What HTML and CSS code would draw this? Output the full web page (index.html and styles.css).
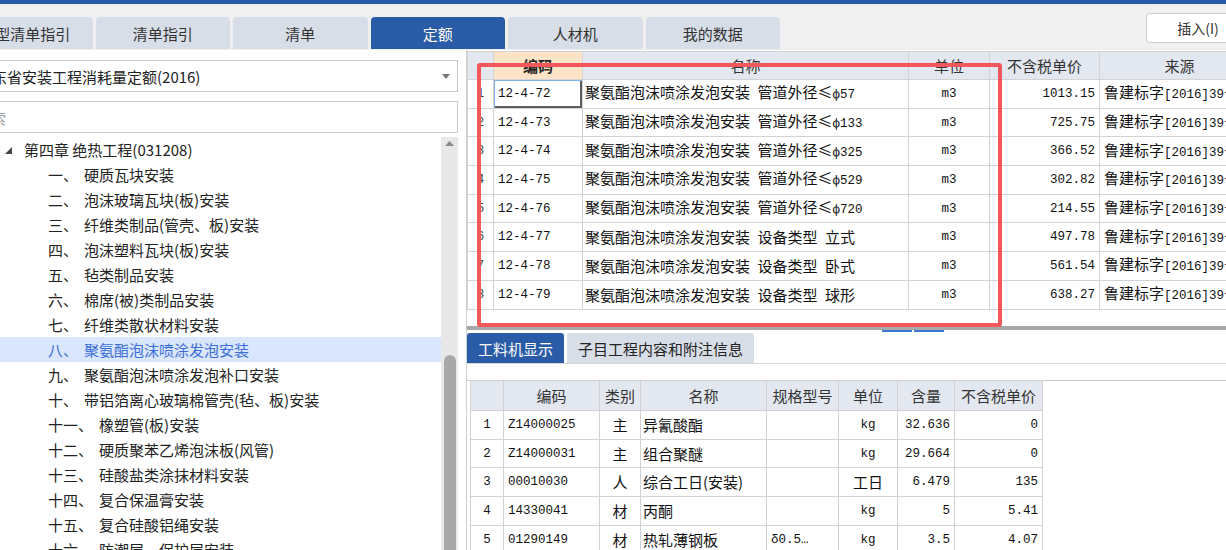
FILE: index.html
```html
<!DOCTYPE html>
<html lang="zh-CN">
<head>
<meta charset="utf-8">
<title>定额</title>
<link rel="stylesheet" href="styles.css">
</head>
<body>
<div class="app">
  <div class="topbar"></div>
  <div class="tabrow">
    <div class="tab">典型清单指引</div>
    <div class="tab">清单指引</div>
    <div class="tab">清单</div>
    <div class="tab active">定额</div>
    <div class="tab">人材机</div>
    <div class="tab">我的数据</div>
    <button class="insert">插入(I)</button>
  </div>
  <div class="main">
    <aside class="left">
      <div class="select">
        <span class="select-text">山东省安装工程消耗量定额(2016)</span>
        <svg class="caret" width="8" height="5" viewBox="0 0 8 5"><polygon points="0,0 8,0 4,5" fill="#777"/></svg>
      </div>
      <div class="search"><span class="placeholder">搜索</span></div>
      <div class="treewrap">
        <ul class="tree">
          <li class="chapter"><svg class="tri" width="7" height="7" viewBox="0 0 7 7"><polygon points="7,0 7,7 0,7" fill="#444"/></svg>第四章 绝热工程(031208)</li>
          <li><span class="num">一、</span>硬质瓦块安装</li>
          <li><span class="num">二、</span>泡沫玻璃瓦块(板)安装</li>
          <li><span class="num">三、</span>纤维类制品(管壳、板)安装</li>
          <li><span class="num">四、</span>泡沫塑料瓦块(板)安装</li>
          <li><span class="num">五、</span>毡类制品安装</li>
          <li><span class="num">六、</span>棉席(被)类制品安装</li>
          <li><span class="num">七、</span>纤维类散状材料安装</li>
          <li class="sel"><span class="num">八、</span>聚氨酯泡沫喷涂发泡安装</li>
          <li><span class="num">九、</span>聚氨酯泡沫喷涂发泡补口安装</li>
          <li><span class="num">十、</span>带铝箔离心玻璃棉管壳(毡、板)安装</li>
          <li><span class="num">十一、</span>橡塑管(板)安装</li>
          <li><span class="num">十二、</span>硬质聚苯乙烯泡沫板(风管)</li>
          <li><span class="num">十三、</span>硅酸盐类涂抹材料安装</li>
          <li><span class="num">十四、</span>复合保温膏安装</li>
          <li><span class="num">十五、</span>复合硅酸铝绳安装</li>
          <li><span class="num">十六、</span>防潮层、保护层安装</li>
        </ul>
        <div class="vscroll">
          <svg class="up" width="9" height="5" viewBox="0 0 9 5"><polygon points="0,5 9,5 4.5,0" fill="#8a8a8a"/></svg>
          <div class="thumb"></div>
        </div>
      </div>
    </aside>
    <section class="right">
      <div class="upper">
        <table class="grid top">
          <colgroup><col style="width:26px"><col style="width:89px"><col style="width:326px"><col style="width:81px"><col style="width:110px"><col style="width:160px"></colgroup>
          <thead>
            <tr><th></th><th class="hl">编码</th><th>名称</th><th>单位</th><th>不含税单价</th><th>来源</th></tr>
          </thead>
          <tbody>
            <tr><td class="rn m">1</td><td class="m focus">12-4-72</td><td class="nm">聚氨酯泡沫喷涂发泡安装&ensp;管道外径≤<span class="m">ф57</span></td><td class="c m">m3</td><td class="r m">1013.15</td><td>鲁建标字<span class="m">[2016]39</span>号</td></tr>
            <tr><td class="rn m">2</td><td class="m">12-4-73</td><td class="nm">聚氨酯泡沫喷涂发泡安装&ensp;管道外径≤<span class="m">ф133</span></td><td class="c m">m3</td><td class="r m">725.75</td><td>鲁建标字<span class="m">[2016]39</span>号</td></tr>
            <tr><td class="rn m">3</td><td class="m">12-4-74</td><td class="nm">聚氨酯泡沫喷涂发泡安装&ensp;管道外径≤<span class="m">ф325</span></td><td class="c m">m3</td><td class="r m">366.52</td><td>鲁建标字<span class="m">[2016]39</span>号</td></tr>
            <tr><td class="rn m">4</td><td class="m">12-4-75</td><td class="nm">聚氨酯泡沫喷涂发泡安装&ensp;管道外径≤<span class="m">ф529</span></td><td class="c m">m3</td><td class="r m">302.82</td><td>鲁建标字<span class="m">[2016]39</span>号</td></tr>
            <tr><td class="rn m">5</td><td class="m">12-4-76</td><td class="nm">聚氨酯泡沫喷涂发泡安装&ensp;管道外径≤<span class="m">ф720</span></td><td class="c m">m3</td><td class="r m">214.55</td><td>鲁建标字<span class="m">[2016]39</span>号</td></tr>
            <tr><td class="rn m">6</td><td class="m">12-4-77</td><td class="nm">聚氨酯泡沫喷涂发泡安装&ensp;设备类型&ensp;立式</td><td class="c m">m3</td><td class="r m">497.78</td><td>鲁建标字<span class="m">[2016]39</span>号</td></tr>
            <tr><td class="rn m">7</td><td class="m">12-4-78</td><td class="nm">聚氨酯泡沫喷涂发泡安装&ensp;设备类型&ensp;卧式</td><td class="c m">m3</td><td class="r m">561.54</td><td>鲁建标字<span class="m">[2016]39</span>号</td></tr>
            <tr><td class="rn m">8</td><td class="m">12-4-79</td><td class="nm">聚氨酯泡沫喷涂发泡安装&ensp;设备类型&ensp;球形</td><td class="c m">m3</td><td class="r m">638.27</td><td>鲁建标字<span class="m">[2016]39</span>号</td></tr>
          </tbody>
        </table>
      </div>
      <div class="splitter"></div>
      <div class="handles"><span></span><span></span></div>
      <div class="subtabs">
        <div class="stab active">工料机显示</div>
        <div class="stab">子目工程内容和附注信息</div>
      </div>
      <div class="strip"></div>
      <table class="grid bottom">
        <colgroup><col style="width:33px"><col style="width:96px"><col style="width:41px"><col style="width:126px"><col style="width:72px"><col style="width:59px"><col style="width:57px"><col style="width:88px"></colgroup>
        <thead>
          <tr><th></th><th>编码</th><th>类别</th><th>名称</th><th>规格型号</th><th>单位</th><th>含量</th><th>不含税单价</th></tr>
        </thead>
        <tbody>
          <tr><td class="c m">1</td><td class="m">Z14000025</td><td class="c">主</td><td class="nm">异氰酸酯</td><td></td><td class="c m">kg</td><td class="r m">32.636</td><td class="r m">0</td></tr>
          <tr><td class="c m">2</td><td class="m">Z14000031</td><td class="c">主</td><td class="nm">组合聚醚</td><td></td><td class="c m">kg</td><td class="r m">29.664</td><td class="r m">0</td></tr>
          <tr><td class="c m">3</td><td class="m">00010030</td><td class="c">人</td><td class="nm">综合工日(安装)</td><td></td><td class="c">工日</td><td class="r m">6.479</td><td class="r m">135</td></tr>
          <tr><td class="c m">4</td><td class="m">14330041</td><td class="c">材</td><td class="nm">丙酮</td><td></td><td class="c m">kg</td><td class="r m">5</td><td class="r m">5.41</td></tr>
          <tr><td class="c m">5</td><td class="m">01290149</td><td class="c">材</td><td class="nm">热轧薄钢板</td><td class="m">δ0.5…</td><td class="c m">kg</td><td class="r m">3.5</td><td class="r m">4.07</td></tr>
        </tbody>
      </table>
    </section>
  </div>
  <div class="redbox"></div>
</div>
</body>
</html>
```

FILE: styles.css
```css
* { box-sizing: border-box; margin: 0; padding: 0; }
html, body { width: 1226px; height: 550px; overflow: hidden; }
body {
  font-family: "Noto Sans CJK SC", "Noto Sans", sans-serif;
  font-size: 15px;
  color: #222;
  background: #f0f0f0;
}
.app { position: relative; width: 1226px; height: 550px; overflow: hidden; }
.topbar { height: 4px; background: #2a5ba6; }

.tabrow {
  height: 46px;
  display: flex;
  align-items: flex-end;
  gap: 3px;
  padding-bottom: 1px;
  margin-left: -42px;
}
.tab {
  flex: none;
  width: 134.5px;
  height: 32px;
  background: #d8dee8;
  border-radius: 4px 4px 0 0;
  display: flex;
  align-items: center;
  justify-content: center;
  color: #333;
  line-height: 1;
}
.tab.active { background: #2a5ba6; color: #fff; }
.insert {
  margin-left: auto;
  align-self: flex-start;
  margin-top: 9px;
  margin-right: -24px;
  flex: none;
  width: 104px;
  height: 30px;
  background: #fff;
  border: 1px solid #cfcfcf;
  border-radius: 3px;
  font-family: inherit;
  font-size: 14px;
  color: #333;
}

.main { display: flex; height: 500px; }

.left {
  flex: none;
  width: 466px;
  background: #fff;
  padding-top: 10px;
  display: flex;
  flex-direction: column;
}
.select, .search {
  flex: none;
  margin-left: -40px;
  width: 498px;
  height: 32px;
  border: 1px solid #c9c9c9;
  display: flex;
  align-items: center;
  padding-left: 16px;
  line-height: 1;
}
.select-text { flex: 1; color: #222; }
.caret { margin-right: 7px; }
.search { margin-top: 9px; padding-left: 15px; }
.placeholder { color: #9a9a9a; }

.treewrap { flex: 1; display: flex; margin-top: 4px; min-height: 0; }
.tree { flex: 1; list-style: none; padding-top: 0; overflow: hidden; }
.tree li {
  height: 25px;
  line-height: 25px;
  padding-left: 48px;
  white-space: nowrap;
  color: #222;
}
.tree li.chapter { padding-left: 5px; display: flex; align-items: center; }
.tri { margin-right: 12px; margin-top: 1px; }
.tree .num { margin-right: 6px; }
.tree li.sel { background: #d9e6fc; color: #3b6fd6; }

.vscroll {
  flex: none;
  width: 17px;
  margin-right: 8px;
  background: #e8e8e8;
  display: flex;
  flex-direction: column;
  align-items: center;
}
.up { margin-top: 4px; }
.thumb {
  margin-top: 209px;
  width: 12px;
  flex: 1;
  background: #a8a8a8;
  border-radius: 6px 6px 0 0;
}

.right {
  flex: 1;
  min-width: 0;
  background: #fff;
  border-left: 1px solid #d0d0d0;
  display: flex;
  flex-direction: column;
  overflow: hidden;
}
.upper { height: 276px; flex: none; padding-top: 1px; overflow: hidden; }

.grid { border-collapse: collapse; table-layout: fixed; }
.grid th, .grid td {
  border: 1px solid #d3d3d3;
  padding: 0 4px;
  white-space: nowrap;
  overflow: hidden;
  font-weight: normal;
  vertical-align: middle;
}
.grid th {
  background: #e3e8f0;
  color: #333;
  font-size: 15px;
  line-height: 18px;
  text-align: center;
}
.grid td { font-size: 15px; line-height: 18px; color: #111; }
.grid td.nm { padding-left: 2px; }
.grid .m { font-family: "Liberation Mono", "Noto Sans CJK SC", monospace; font-size: 12.5px; }
.grid .c { text-align: center; }
.grid .r { text-align: right; }

.top { width: 792px; }
.top thead tr { height: 28px; }
.top tbody tr { height: 28.7px; }
.top th.hl { background: #fde4c6; font-weight: bold; color: #222; }
.top .rn { text-align: center; color: #444; padding: 0; }
.top td.focus { box-shadow: inset 1px 1px 0 #7fb1ea, inset -2px -2px 0 #5e5e5e; }

.splitter { flex: none; height: 4px; background: #a8a8a8; }
.handles { flex: none; height: 2px; display: flex; gap: 2px; padding-left: 415px; }
.handles span { width: 30px; background: #3b78d4; }

.subtabs { flex: none; display: flex; gap: 3px; height: 30px; margin-top: 1px; }
.stab {
  background: #d8dee8;
  color: #222;
  border-radius: 3px 3px 0 0;
  display: flex;
  align-items: center;
  padding: 0 11px;
  line-height: 1;
}
.stab.active { background: #2a5ba6; color: #fff; width: 97px; justify-content: center; padding: 0; }

.strip { flex: none; height: 18px; border-top: 1px solid #d6d6d6; border-bottom: 1px solid #c8c8c8; }

.bottom { width: 572px; margin-left: 3px; margin-top: -1px; }
.bottom thead tr { height: 30px; }
.bottom tbody tr { height: 28.7px; }

.redbox {
  position: absolute;
  left: 477px;
  top: 63px;
  width: 525px;
  height: 264px;
  border: 4px solid #f2585b;
  border-radius: 3px;
  pointer-events: none;
}
```
